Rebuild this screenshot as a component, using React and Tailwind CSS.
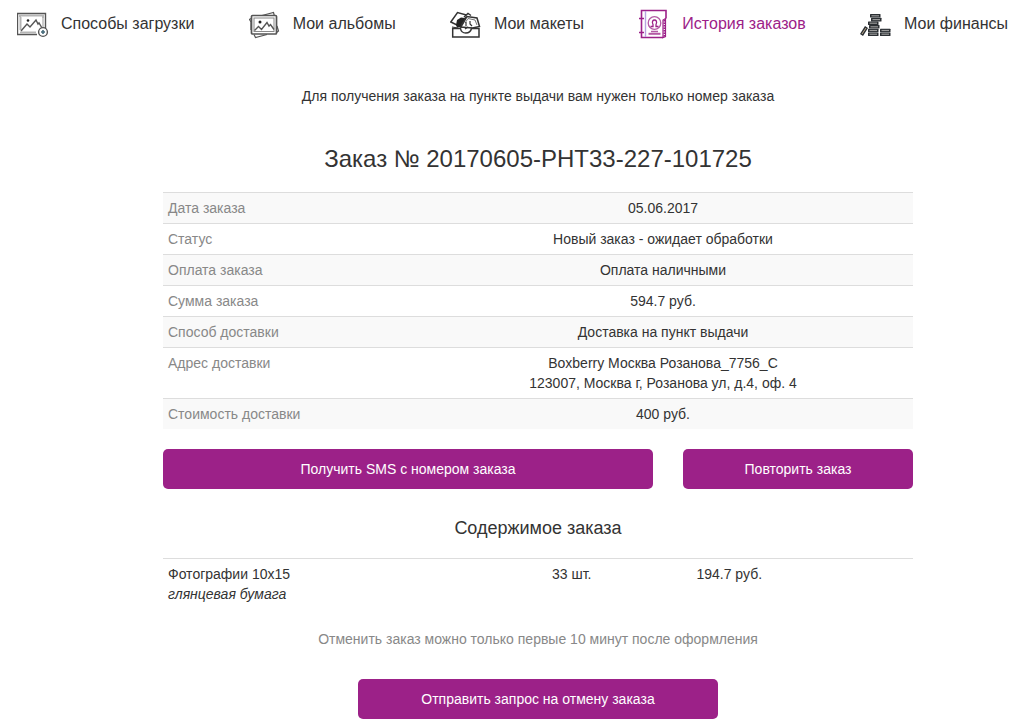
import clsx from "clsx";

function UploadIcon() {
    return (
        <svg width="32" height="32" viewBox="0 -2 32 32" fill="none" stroke="#555" aria-hidden="true">
            <path d="M20 24.5H.5v-21h28v15" strokeWidth="1.4" />
            <path d="M3 7v-1.5h23V8M3 22.5h16M3.5 7v13" stroke="#b5b5b5" strokeWidth="2" />
            <path d="M26 8v9" stroke="#999" />
            <path d="M4 21l6-7 3 3 6-7 2 4 1-1 3 5" strokeWidth="1.4" />
            <circle cx="11" cy="10.5" r="1.3" fill="#222" stroke="none" />
            <circle cx="26" cy="22" r="4.4" fill="#fff" strokeWidth="1.4" />
            <path d="M24 22h4M26 20v4" stroke="#456a7a" strokeWidth="1.6" />
        </svg>
    );
}

function AlbumsIcon() {
    return (
        <svg width="32" height="32" viewBox="0 0 32 32" fill="none" stroke="#555" aria-hidden="true">
            <path d="M2 22V14L.5 11.500l1.500-1M13 7.500L24.500 4.500l.8 3M28 18l1.500 5-2 1.500M5 26.500l1.500 3L18 26.500" strokeWidth="1.2" />
            <rect x="2.5" y="7.500" width="25" height="18.500" rx="1" fill="#fff" strokeWidth="1.7" />
            <rect x="5" y="10" width="20" height="13.500" stroke="#888" />
            <path d="M5.500 22.500l4-4 3 3 5.500-7 2 3.500 1.500-1.500 3.500 5" strokeWidth="1.4" />
            <circle cx="11" cy="14" r="1.5" fill="#222" stroke="none" />
        </svg>
    );
}

function LayoutsIcon() {
    return (
        <svg width="32" height="32" viewBox="0 0 32 32" fill="none" stroke="#333" aria-hidden="true">
            <path d="M.8 14L7.500 4.500l9 2.500-4 11-5.500-1z" fill="#fff" strokeWidth="1.5" />
            <path d="M6 17l1-5 4-2.500 4 .5-2 9-6 .5z" fill="#222" stroke="none" />
            <path d="M14 9l4-3.500 3 2M11 19L17 8.500l10 1.500 2.500 8.500-7 1.500z" fill="#fff" strokeWidth="1.5" />
            <path d="M15 15l3-4.500 7 1.500 2 5" stroke="#777" />
            <path d="M2.700 20.500H10.500c1 6 9.500 6 11 0h7.500v8.500H2.700z" fill="#fff" strokeWidth="1.5" />
            <path d="M2 19l6 1M11 20c0-3 1-5 3-7M16 14v4M20 13v3l2 2M15 21l3-2" strokeWidth="1.2" />
        </svg>
    );
}

function HistoryIcon() {
    return (
        <svg width="32" height="32" viewBox="-1 -1 32 32" fill="none" stroke="#9c2188" aria-hidden="true">
            <path d="M24 28.500H2.500v-27h24.500v8" strokeWidth="1.6" />
            <path d="M0 9.500h5M0 23.500h5" strokeWidth="1.6" />
            <path d="M6.500 2v26" stroke="#b9a3e0" strokeWidth="1.4" />
            <circle cx="15.500" cy="14" r="6.300" stroke="#b45aa5" strokeWidth="1.3" />
            <path d="M11.500 17.500h2.500v-2c-3-6 6-6 3 0v2h2.500" strokeWidth="1.3" />
            <path d="M12 22.500h7" stroke="#b45aa5" strokeWidth="1.5" />
            <path d="M9.500 24.800h12" stroke="#b45aa5" strokeWidth="2" />
            <path d="M24 28.500V11l2.500-1.500v18z" strokeWidth="1.2" />
            <path d="M25.500 11v17" strokeWidth="2" strokeDasharray="1.500 1" />
        </svg>
    );
}

function FinanceIcon() {
    const coins = [
        [10, 6],
        [11, 9.8],
        [8, 13.4],
        [9, 17],
        [8, 20.7],
        [8, 24.4],
        [20, 20.7],
        [20, 24.4],
    ];

    return (
        <svg width="32" height="32" viewBox="0 0 32 32" aria-hidden="true">
            {coins.map(([x, y]) => (
                <g key={`${x}-${y}`}>
                    <rect x={x} y={y} width="10.500" height="3.600" rx="0.500" fill="#2b2f33" />
                    <path d={`M${x + 1.5} ${y + 1.8}h7.5`} stroke="#999" strokeWidth="1.2" />
                </g>
            ))}
            <path d="M1.500 27l5-8" stroke="#2b2f33" strokeWidth="3.600" />
            <path d="M2 26l4-6" stroke="#bba98c" />
        </svg>
    );
}

const navItems = [
    { label: "Способы загрузки", Icon: UploadIcon },
    { label: "Мои альбомы", Icon: AlbumsIcon },
    { label: "Мои макеты", Icon: LayoutsIcon },
    { label: "История заказов", Icon: HistoryIcon, active: true },
    { label: "Мои финансы", Icon: FinanceIcon },
];

const details = [
    { name: "Дата заказа", value: ["05.06.2017"] },
    { name: "Статус", value: ["Новый заказ - ожидает обработки"] },
    { name: "Оплата заказа", value: ["Оплата наличными"] },
    { name: "Сумма заказа", value: ["594.7 руб."] },
    { name: "Способ доставки", value: ["Доставка на пункт выдачи"] },
    {
        name: "Адрес доставки",
        value: ["Boxberry Москва Розанова_7756_С", "123007, Москва г, Розанова ул, д.4, оф. 4"],
    },
    { name: "Стоимость доставки", value: ["400 руб."] },
];

function Button({ className, children }) {
    return (
        <button
            type="button"
            className={clsx("h-10 rounded-[5px] bg-[#9c2188] text-white hover:bg-[#851b74] cursor-pointer", className)}
        >
            {children}
        </button>
    );
}

export default function App() {
    return (
        <div className="min-h-screen bg-white pb-2 font-['Liberation_Sans',Arial,sans-serif] text-sm leading-5 text-[#333]">
            <nav className="flex justify-between pl-[17px] pr-5 pt-2">
                {navItems.map(({ label, Icon, active }) => (
                    <a
                        key={label}
                        href="#"
                        className={clsx("flex items-center gap-3 text-base whitespace-nowrap", active && "text-[#9c2188]")}
                    >
                        <Icon />
                        {label}
                    </a>
                ))}
            </nav>

            <main className="pl-12">
                <div className="mx-auto max-w-[750px] pt-[46px] text-center">
                    <p>Для получения заказа на пункте выдачи вам нужен только номер заказа</p>

                    <h1 className="mt-10 text-2xl leading-[26px]">Заказ № 20170605-PHT33-227-101725</h1>

                    {/* Order details */}
                    <table className="mt-5 w-full table-fixed">
                        <tbody>
                            {details.map(({ name, value }) => (
                                <tr key={name} className="border-t border-[#ddd] odd:bg-[#f9f9f9]">
                                    <th scope="row" className="w-1/3 p-[5px] text-left align-top font-normal text-[#888]">
                                        {name}
                                    </th>
                                    <td className="p-[5px]">
                                        {value.map((line) => (
                                            <div key={line}>{line}</div>
                                        ))}
                                    </td>
                                </tr>
                            ))}
                        </tbody>
                    </table>

                    <div className="mt-5 grid grid-cols-3 gap-[30px]">
                        <Button className="col-span-2">Получить SMS с номером заказа</Button>
                        <Button>Повторить заказ</Button>
                    </div>

                    {/* Order contents */}
                    <h2 className="mt-[29px] text-lg leading-5">Содержимое заказа</h2>
                    <table className="mt-5 w-full table-fixed">
                        <tbody>
                            <tr className="border-t border-[#ddd] align-top">
                                <td className="w-[44%] p-[5px] text-left">
                                    Фотографии 10x15
                                    <br />
                                    <em>глянцевая бумага</em>
                                </td>
                                <td className="w-[21%] p-[5px]">33 шт.</td>
                                <td className="w-[21%] p-[5px]">194.7 руб.</td>
                                <td className="p-[5px]"></td>
                            </tr>
                        </tbody>
                    </table>

                    <p className="mt-5 text-[#888]">Отменить заказ можно только первые 10 минут после оформления</p>
                    <Button className="mt-[30px] w-[360px] max-w-full">Отправить запрос на отмену заказа</Button>
                </div>
            </main>
        </div>
    );
}
